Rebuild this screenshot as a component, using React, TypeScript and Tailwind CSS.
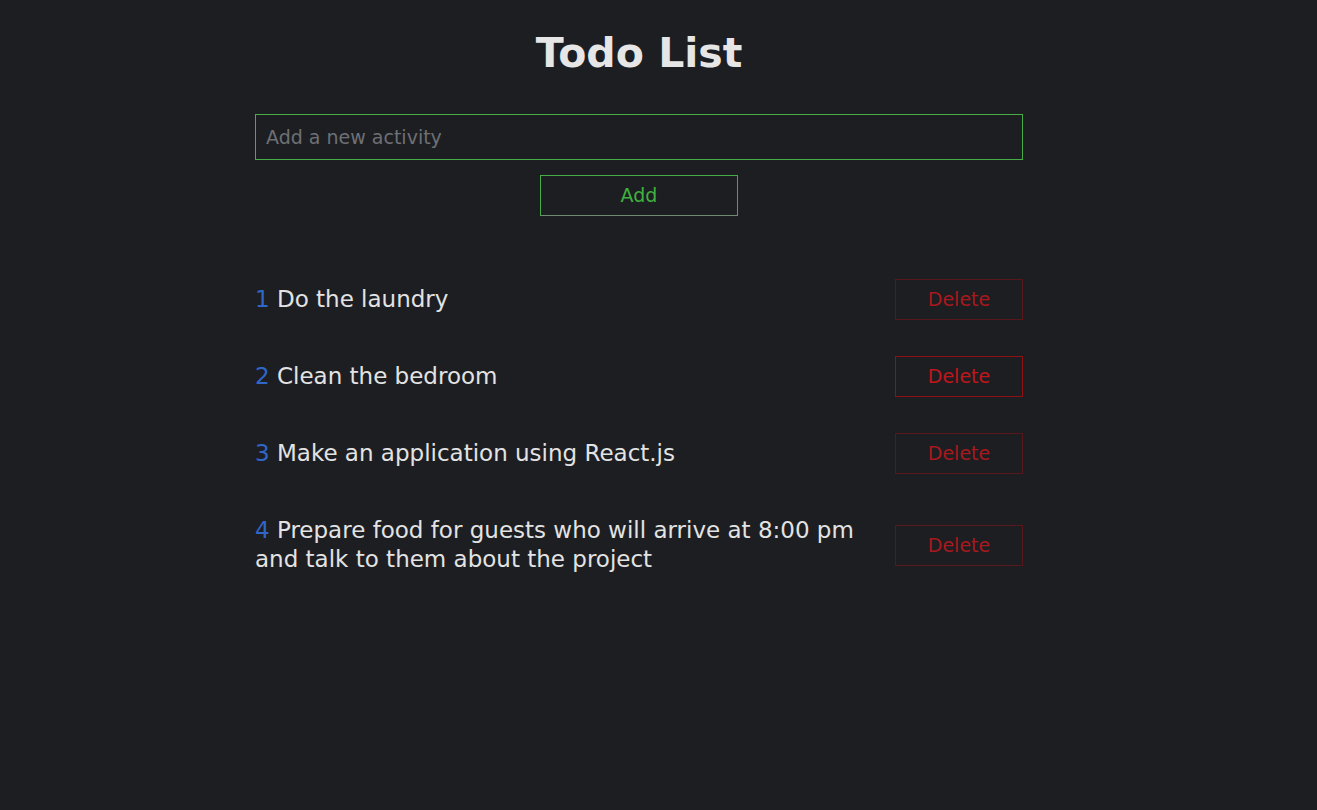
import { useState } from 'react';

const initialTodos = [
  'Do the laundry',
  'Clean the bedroom',
  'Make an application using React.js',
  'Prepare food for guests who will arrive at 8:00 pm and talk to them about the project',
];

export default function App() {
  const [todos, setTodos] = useState(initialTodos);
  const [value, setValue] = useState('');

  function handleAdd() {
    if (!value.trim()) return;
    setTodos([...todos, value.trim()]);
    setValue('');
  }

  return (
    <div className="min-h-[810px] bg-[#1d1e22] font-['Century_Gothic','DejaVu_Sans',sans-serif] text-[#e3e3e3]">
      <div className="ml-[255px] w-[768px] pt-[24px]">
        <h1 className="text-center text-[41px] font-bold leading-[58px] text-[#e6e6e6]">Todo List</h1>

        <input
          value={value}
          onChange={(e) => setValue(e.target.value)}
          placeholder="Add a new activity"
          className="mt-[32px] block h-[46px] w-full border border-[#46ad46] bg-transparent px-[10px] text-[19px] text-[#e3e3e3] outline-none placeholder:text-[#6d7075]"
        />
        <div className="mt-[15px] flex justify-center">
          <button
            onClick={handleAdd}
            className="h-[41px] w-[198px] border border-[#46ad46] border-r-[#6f8a6f] border-b-[#6f8a6f] text-[19px] text-[#3fb13f]"
          >
            Add
          </button>
        </div>

        {/* List */}
        <ul className="mt-[63px] flex flex-col gap-[36px]">
          {todos.map((todo, i) => (
            <li
              key={i}
              className={`flex items-center justify-between gap-[40px] ${i === 3 ? 'mt-[6px]' : ''}`}
            >
              <p className="w-[600px] text-[23px] leading-[29px]">
                <span className="text-[#2f66c8]">{i + 1}</span> {todo}
              </p>
              <button
                onClick={() => setTodos(todos.filter((_, j) => j !== i))}
                className={
                  i === 1
                    ? 'h-[41px] w-[128px] shrink-0 border border-[#8e1114] text-[19px] text-[#c0161b]'
                    : 'h-[41px] w-[128px] shrink-0 border border-[#5a171b] text-[19px] text-[#a8191d]'
                }
              >
                Delete
              </button>
            </li>
          ))}
        </ul>
      </div>
    </div>
  );
}
